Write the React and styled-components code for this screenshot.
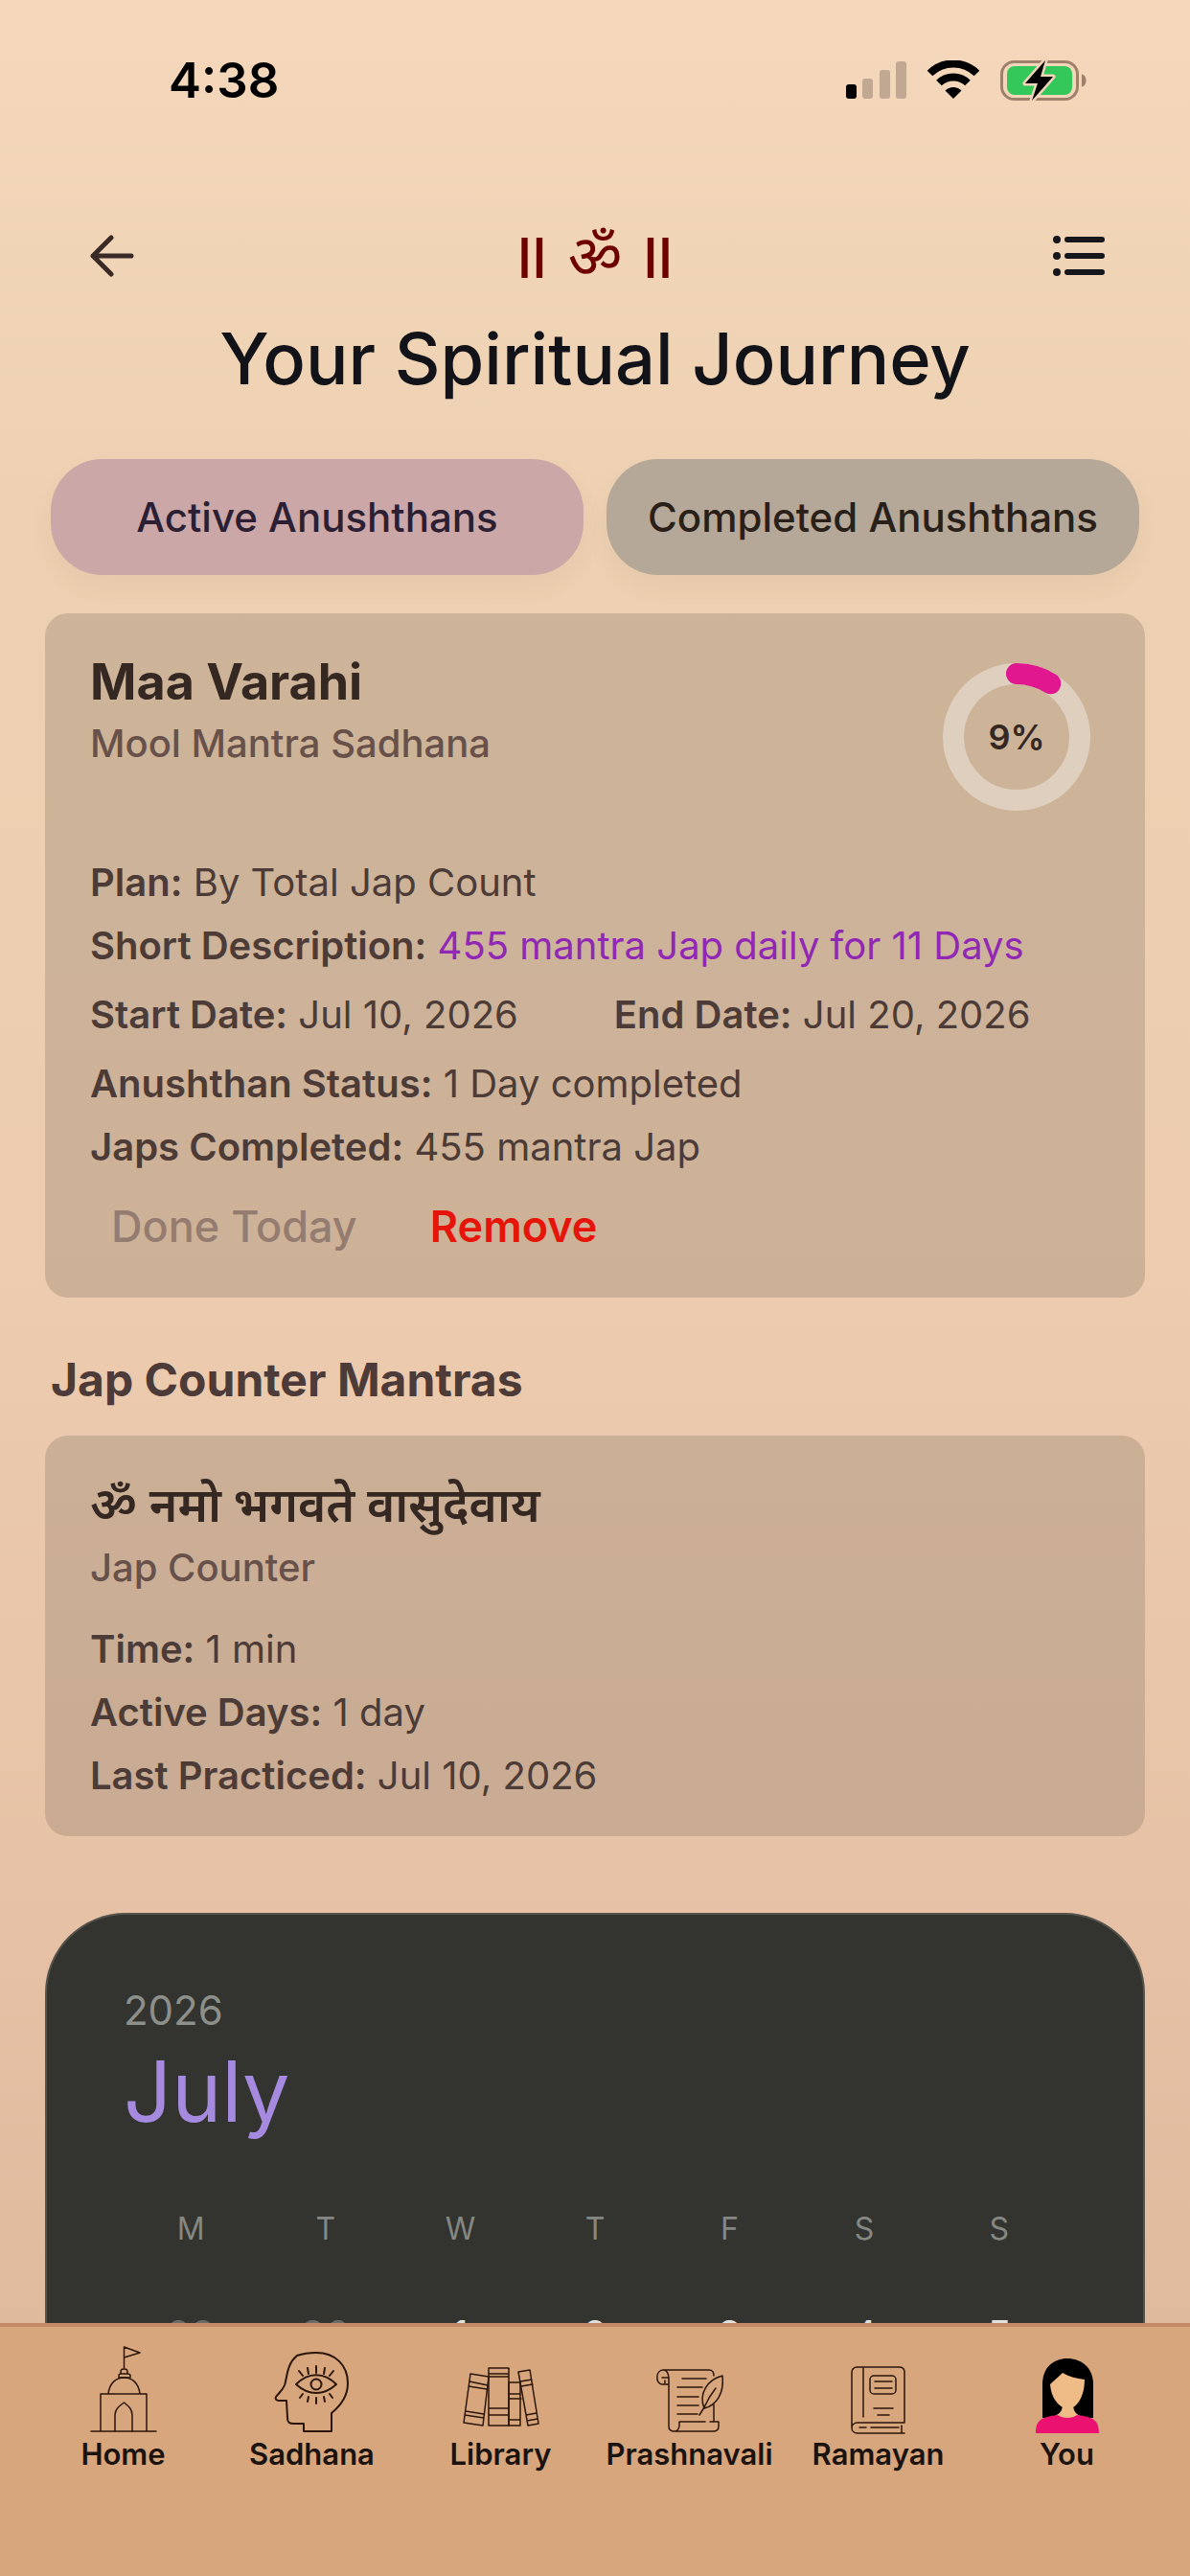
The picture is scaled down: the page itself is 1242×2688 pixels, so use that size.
import React from 'react';
import styled, { createGlobalStyle } from 'styled-components';

const GlobalStyle = createGlobalStyle`
    * {
        box-sizing: border-box;
    }

    body {
        margin: 0;
        font-family: Inter, "Noto Sans", sans-serif;
        color: #352822;
    }

    h1, h2, h3, p {
        margin: 0;
    }
`

// page

const Page = styled.div`
    display: flex;
    flex-direction: column;
    height: 100vh;
    overflow: hidden;
    background: linear-gradient(#f5d8bb, #edd1b2 20%, #edccaf 48%, #e6c1a5 75%, #ddb699);
`

const StatusBar = styled.header`
    flex: none;
    display: flex;
    justify-content: space-between;
    align-items: center;
    height: 168px;
    padding: 0 108px 0 176px;
    color: #000;
`

const Clock = styled.time`
    font-size: 51px;
    font-weight: 600;
    line-height: 66px;
`

const StatusIcons = styled.div`
    display: flex;
    align-items: center;
    gap: 21px;
`

const TopBar = styled.nav`
    flex: none;
    display: flex;
    justify-content: space-between;
    align-items: center;
    height: 162px;
    padding: 36px 88px 0;
`

const IconButton = styled.button`
    display: flex;
    padding: 0;
    border: none;
    background: none;
    color: ${props => props.$color};
    cursor: pointer;
`

const Om = styled.div`
    display: flex;
    align-items: baseline;
    gap: 22px;
    padding-top: 4px;
    font-size: 57px;
    font-weight: 500;
    line-height: 72px;
    color: #6e0000;

    span:lang(hi) {
        font-size: 62px;
        font-weight: 400;
    }
`

const Title = styled.h1`
    flex: none;
    font-size: 74px;
    font-weight: 500;
    line-height: 88px;
    text-align: center;
    color: #121318;
`

const Content = styled.main`
    flex: 1;
    min-height: 0;
    overflow: hidden;
    padding: 61px 47px 0;
`

// tabs

const Tabs = styled.div`
    display: grid;
    grid-template-columns: 1fr 1fr;
    gap: 24px;
    padding: 0 6px;
    margin-bottom: 40px;
`

const Tab = styled.button`
    height: 121px;
    padding: 0;
    border: none;
    border-radius: 54px;
    background: ${props => props.$active ? '#cba7a7' : '#b5a898'};
    box-shadow: 0 12px 24px rgba(120, 90, 60, 0.06);
    color: ${props => props.$active ? '#2c1f33' : '#292119'};
    font-family: inherit;
    font-size: 42px;
    font-weight: 500;
    cursor: pointer;
`

// cards

const Card = styled.section`
    border-radius: 24px;
    padding: 38px 47px 26px;
    background: rgba(140, 125, 105, 0.33);
`

const CardTop = styled.div`
    display: flex;
    justify-content: space-between;
    height: 210px;
    padding-right: 10px;
`

const CardTitle = styled.h2`
    font-size: 52px;
    font-weight: 700;
    line-height: 68px;

    &:lang(hi) {
        padding-bottom: 2px;
        font-size: 50px;
        font-weight: 600;
    }
`

const Subtitle = styled.p`
    font-size: 40px;
    font-weight: 500;
    line-height: 60px;
    color: #67514a;
`

const Row = styled.p`
    display: flex;
    gap: 100px;
    padding: ${props => props.$spaced ? '6px 0' : '0'};
    font-size: 40px;
    line-height: 66px;
    color: #4c3b36;

    b {
        font-weight: 600;
    }

    em {
        font-style: normal;
        color: #9127b5;
    }
`

const Details = styled.div`
    padding: 22px 0 4px;
`

const Actions = styled.div`
    display: flex;
    gap: 76px;
    padding: 2px 22px 0;
`

const TextButton = styled.button`
    padding: 0;
    border: none;
    background: none;
    color: ${props => props.$danger ? '#e6150a' : '#947c70'};
    font-family: inherit;
    font-size: 45px;
    font-weight: ${props => props.$danger ? 600 : 500};
    line-height: 96px;
    cursor: pointer;
`

const SectionTitle = styled.h2`
    margin: 56px 6px 28px;
    font-size: 48px;
    font-weight: 700;
    line-height: 60px;
    color: #4c3b38;
`

// calendar

const Calendar = styled.section`
    height: 1000px;
    margin-top: 80px;
    padding: 73px 80px;
    border: 2px solid #55534c;
    border-radius: 84px;
    background: #333430;
`

const Year = styled.p`
    font-size: 42px;
    line-height: 54px;
    color: #8d8f8a;
`

const Month = styled.h2`
    font-size: 88px;
    font-weight: 400;
    line-height: 114px;
    color: #a58ae0;
`

const Dates = styled.table`
    width: 100%;
    margin-top: 46px;
    border-collapse: collapse;
    table-layout: fixed;
`

const Weekday = styled.th`
    height: 80px;
    padding: 0;
    font-size: 32px;
    font-weight: 400;
    color: #858782;
`

const Day = styled.td`
    height: 142px;
    padding: 0;
    font-size: 42px;
    text-align: center;
    color: ${props => props.$faded ? '#6a6b67' : '#e0e0dc'};
`

// bottom navigation

const BottomNav = styled.nav`
    flex: none;
    display: grid;
    grid-template-columns: repeat(6, 1fr);
    height: 264px;
    padding: 18px 30px 0;
    border-top: 4px solid #c58b69;
    background: #d8a67c;
`

const NavLink = styled.a`
    display: flex;
    flex-direction: column;
    align-items: center;
    font-size: 31px;
    font-weight: 600;
    line-height: 38px;
    color: #1b1310;
    text-decoration: none;
`

const NavIcon = styled.svg`
    width: 96px;
    height: 96px;
    fill: none;
    stroke: #2a160a;
    stroke-width: ${props => props.$bold ? 2 : 1.5};
    stroke-linejoin: round;
    stroke-linecap: round;
`

function SignalIcon() {
    return (
        <svg width="63" height="42" viewBox="0 0 63 42">
            <rect x="0" y="25" width="11" height="15" rx="3" fill="#000" />
            <g fill="#c0a892">
                <rect x="17" y="19" width="11" height="21" rx="3" />
                <rect x="35" y="10" width="11" height="30" rx="3" />
                <rect x="52" y="1" width="11" height="39" rx="3" />
            </g>
        </svg>
    )
}

function WifiIcon() {
    return (
        <svg width="56" height="42" viewBox="0 0 56 42">
            <g fill="none" stroke="#000" strokeWidth="8">
                <path d="M3.500 13.500a35 35 0 0 1 49 0" />
                <path d="M13 23.500a21.500 21.500 0 0 1 30 0" />
            </g>
            <path d="M28 40l-8.500-8.500a12 12 0 0 1 17 0z" />
        </svg>
    )
}

function BatteryIcon() {
    return (
        <svg width="90" height="46" viewBox="0 0 90 46">
            <rect x="1.500" y="3.500" width="79" height="39" rx="13" fill="none" stroke="#9f806c" strokeWidth="3" />
            <rect x="7" y="8" width="68" height="30" rx="8" fill="#34c759" />
            <path d="M85 16.500c6 1 6 12 0 13z" fill="#9f806c" />
            <path
                d="M47 2L26 26h13l-6 18 22-25H42z"
                fill="#000"
                stroke="#f0d4b8"
                strokeWidth="5"
                strokeLinejoin="round"
                paintOrder="stroke"
            />
        </svg>
    )
}

function BackIcon() {
    return (
        <svg width="56" height="48" viewBox="0 0 56 48" fill="none" stroke="currentColor" strokeWidth="5" strokeLinecap="round" strokeLinejoin="round">
            <path d="M28 5L9 24l19 19M9 24h40" />
        </svg>
    )
}

function ListIcon() {
    return (
        <svg width="56" height="48" viewBox="0 0 56 48" fill="currentColor">
            {[7, 24, 41].map(y => (
                <g key={y}>
                    <circle cx="5" cy={y} r="4" />
                    <rect x="13" y={y - 3} width="42" height="6" rx="3" />
                </g>
            ))}
        </svg>
    )
}

const RingBox = styled.div`
    display: grid;
    place-items: center;
    width: 154px;
    height: 154px;
    margin-top: 14px;

    svg, span {
        grid-area: 1 / 1;
    }

    span {
        font-size: 36px;
        font-weight: 600;
    }
`

function ProgressRing({ value }) {
    return (
        <RingBox>
            <svg width="154" height="154" viewBox="0 0 154 154" fill="none" strokeWidth="22">
                <circle cx="77" cy="77" r="66" stroke="#decfbf" />
                <circle
                    cx="77"
                    cy="77"
                    r="66"
                    stroke="#e0178f"
                    strokeLinecap="round"
                    pathLength="100"
                    strokeDasharray={`${value} 100`}
                    transform="rotate(-90 77 77)"
                />
            </svg>
            <span>{value}%</span>
        </RingBox>
    )
}

function TempleIcon() {
    return (
        <NavIcon viewBox="0 0 96 96">
            <path d="M14 91h68M24 91V52h48v39M32 52c1-11 8-17 16.500-17S64 41 65 52" />
            <path d="M39 91V74c0-6 4-9 9.500-13 5 4 8.500 7 8.500 13v17" />
            <path d="M48.500 26V3L65 9l-16.500 5M45 31c0-4 0-5 3.500-5s3.500 1 3.500 5M43 35v-2q0-2 2-2h7q3 0 3 2v2z" />
        </NavIcon>
    )
}

function MindIcon() {
    return (
        <NavIcon viewBox="0 0 96 96" $bold>
            <path d="M39 91v-8H29c-5 0-7-1-7-6l-1-18h-8c-3 0-4-2-3-4 4-5 7-7 9-12 3-9 2-22 13-31 6-2 14-3 20-3 20 0 33 13 33 32 0 13-6 22-17 31v19z" />
            <path d="M31 42c13-13 29-13 42 0-13 12-29 12-42 0z" />
            <circle cx="52" cy="42" r="5.500" />
            <path d="M52 23v7M43 25l1 6M61 25l-1 6M34 28l4 5M70 28l-4 5M52 56v6M44 55l-1 5M60 55l1 5M38 52l-3 4M66 52l3 4" />
        </NavIcon>
    )
}

function BooksIcon() {
    return (
        <NavIcon viewBox="0 0 96 96">
            <path d="M16 31l19 3-6 51-20-3zM15 39l19 4M14 44l19 3M11 70l19 3M10 74l20 3" />
            <path d="M35 25h21v60H35zM35 31h21M35 34h21M35 67h21M35 74h21" />
            <path d="M56 40h12v45H56zM56 52h12M56 57h13M56 79h12" />
            <path d="M66 29l12-2 9 56-11 2zM68 39l12-2M69 44l12-2M74 74l11-2M75 80l11-2" />
        </NavIcon>
    )
}

function ScrollIcon() {
    return (
        <NavIcon viewBox="0 0 96 96">
            <path d="M20 27h48c3 0 5 2 5 6M26 42h-7c-7 0-7-15 1-15 5 0 6 4 6 10v49c0 3 2 5 6 5h40c4 0 6-2 6-5v-5h-9M64 81H37v4c0 3-2 6-5 6M73 63v18" />
            <path d="M19 35h7M22 38v3M40 36h25M35 45h26M35 55h22M35 64h22M35 73h21" />
            <path d="M58 74l5-8c4-9 8-15 12-20M63 67c-6-15 3-30 19-34 2 18-6 31-19 34z" />
        </NavIcon>
    )
}

function BookIcon() {
    return (
        <NavIcon viewBox="0 0 96 96">
            <path d="M20 87V30c0-4 2-6 6-6h43c4 0 6 2 6 5v53H26c-8 0-8 11 0 11h49M72 85v8M32 25v51" />
            <rect x="39" y="33" width="27" height="19" rx="4" />
            <path d="M44 39h18M44 46h18M43 67h20M47 74h12M28 87h7M40 87h29" />
        </NavIcon>
    )
}

function AvatarIcon() {
    return (
        <NavIcon viewBox="0 0 96 96">
            <g stroke="none">
                <path d="M22 77V42c0-18 12-27 26-27s27 9 27 27v35z" fill="#000" />
                <path d="M43 62h11c0 7 2 10 7 13l-13 4-13-4c6-3 8-6 8-13z" fill="#efbb86" />
                <path d="M30 42c4-4 9-8 13-12 7 4 15 6 23 7 0 14-5 25-12 29-3 2-8 2-11 0-8-5-12-13-13-24z" fill="#efbb86" />
                <path d="M15 93c0-13 5-17 23-19 5 4 15 4 20 0 18 2 23 6 23 19z" fill="#ea1170" />
            </g>
        </NavIcon>
    )
}

const tabs = [
    { label: 'Home', icon: <TempleIcon /> },
    { label: 'Sadhana', icon: <MindIcon /> },
    { label: 'Library', icon: <BooksIcon /> },
    { label: 'Prashnavali', icon: <ScrollIcon /> },
    { label: 'Ramayan', icon: <BookIcon /> },
    { label: 'You', icon: <AvatarIcon /> },
]

const weekdays = ['M', 'T', 'W', 'T', 'F', 'S', 'S']
const firstWeek = [29, 30, 1, 2, 3, 4, 5]

export default function App() {
    return (
        <Page>
            <GlobalStyle />
            <StatusBar>
                <Clock>4:38</Clock>
                <StatusIcons>
                    <SignalIcon />
                    <WifiIcon />
                    <BatteryIcon />
                </StatusIcons>
            </StatusBar>

            <TopBar>
                <IconButton $color="#3a2a27" aria-label="Back"><BackIcon /></IconButton>
                <Om>
                    <span>II</span>
                    <span lang="hi">ॐ</span>
                    <span>II</span>
                </Om>
                <IconButton $color="#16171c" aria-label="Menu"><ListIcon /></IconButton>
            </TopBar>
            <Title>Your Spiritual Journey</Title>

            <Content>
                <Tabs>
                    <Tab $active>Active Anushthans</Tab>
                    <Tab>Completed Anushthans</Tab>
                </Tabs>

                <Card>
                    <CardTop>
                        <div>
                            <CardTitle>Maa Varahi</CardTitle>
                            <Subtitle>Mool Mantra Sadhana</Subtitle>
                        </div>
                        <ProgressRing value={9} />
                    </CardTop>
                    <Row><span><b>Plan:</b> By Total Jap Count</span></Row>
                    <Row><span><b>Short Description:</b> <em>455 mantra Jap daily for 11 Days</em></span></Row>
                    <Row $spaced>
                        <span><b>Start Date:</b> Jul 10, 2026</span>
                        <span><b>End Date:</b> Jul 20, 2026</span>
                    </Row>
                    <Row><span><b>Anushthan Status:</b> 1 Day completed</span></Row>
                    <Row><span><b>Japs Completed:</b> 455 mantra Jap</span></Row>
                    <Actions>
                        <TextButton>Done Today</TextButton>
                        <TextButton $danger>Remove</TextButton>
                    </Actions>
                </Card>

                <SectionTitle>Jap Counter Mantras</SectionTitle>
                <Card>
                    <CardTitle lang="hi">ॐ नमो भगवते वासुदेवाय</CardTitle>
                    <Subtitle>Jap Counter</Subtitle>
                    <Details>
                        <Row><span><b>Time:</b> 1 min</span></Row>
                        <Row><span><b>Active Days:</b> 1 day</span></Row>
                        <Row><span><b>Last Practiced:</b> Jul 10, 2026</span></Row>
                    </Details>
                </Card>

                <Calendar>
                    <Year>2026</Year>
                    <Month>July</Month>
                    <Dates>
                        <thead>
                            <tr>{weekdays.map((day, i) => <Weekday key={i} scope="col">{day}</Weekday>)}</tr>
                        </thead>
                        <tbody>
                            <tr>{firstWeek.map(day => <Day key={day} $faded={day > 20}>{day}</Day>)}</tr>
                        </tbody>
                    </Dates>
                </Calendar>
            </Content>

            <BottomNav>
                {tabs.map(tab => (
                    <NavLink href="#" key={tab.label}>
                        {tab.icon}
                        {tab.label}
                    </NavLink>
                ))}
            </BottomNav>
        </Page>
    )
}
